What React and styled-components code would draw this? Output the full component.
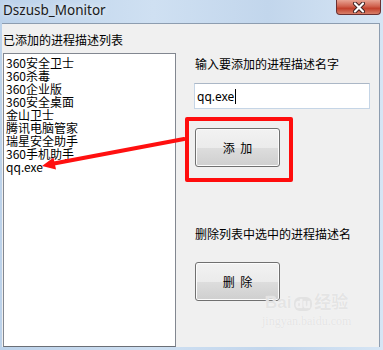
import React from 'react';
import styled, { createGlobalStyle } from 'styled-components';

const Global = createGlobalStyle`
  html, body {
    margin: 0;
    padding: 0;
    background: #c3d7ed;
  }
`;

const items = [
  '360安全卫士',
  '360杀毒',
  '360企业版',
  '360安全桌面',
  '金山卫士',
  '腾讯电脑管家',
  '瑞星安全助手',
  '360手机助手',
  'qq.exe',
];

const cjk = `"Noto Sans CJK SC", "Noto Sans", sans-serif`;

const App = () => {
  return (
    <>
      <Global />
      <Window>
        <TitleBar>
          <Title>Dszusb_Monitor</Title>
          <CloseButton>
            <svg width="16" height="11" viewBox="0 0 16 11">
              <path d="M4 1.5 L12 9.5 M12 1.5 L4 9.5" stroke="#3b2020" strokeWidth="4" strokeLinecap="round" />
              <path d="M4 1.5 L12 9.5 M12 1.5 L4 9.5" stroke="#ffffff" strokeWidth="2.2" strokeLinecap="round" />
            </svg>
          </CloseButton>
        </TitleBar>
        <Client>
          <LeftColumn>
            <Label>已添加的进程描述列表</Label>
            <ListBox>
              {items.map((it) => (
                <ListItem key={it}>{it}</ListItem>
              ))}
            </ListBox>
          </LeftColumn>
          <RightColumn>
            <Label>输入要添加的进程描述名字</Label>
            <TextBox>
              qq.exe<Caret />
            </TextBox>
            <Button $top={19}>添 加</Button>
            <Label $top={59}>删除列表中选中的进程描述名</Label>
            <Button $top={20}>删 除</Button>
          </RightColumn>
        </Client>
        <Highlight />
        <Watermark>
          <WatermarkLogo>
            Bai<Paw>du</Paw>经验
          </WatermarkLogo>
          <WatermarkUrl>jingyan.baidu.com</WatermarkUrl>
        </Watermark>
        <Annotation width="383" height="350" viewBox="0 0 383 350">
          <line x1="184" y1="139" x2="54" y2="163.5" stroke="#ff1010" strokeWidth="4" strokeLinecap="round" />
          <polygon points="42,166 56,169.5 53.5,157.5" fill="#ff1010" />
        </Annotation>
      </Window>
    </>
  );
};

const Window = styled.div`
  position: relative;
  width: 383px;
  height: 350px;
  display: flex;
  flex-direction: column;
  overflow: hidden;
  background: linear-gradient(90deg, #bcd2ea 0%, #cfe0f2 40%, #c2d6ec 70%, #d6e5f4 100%);
`;

const TitleBar = styled.div`
  height: 23px;
  flex: none;
  display: flex;
  align-items: flex-start;
  justify-content: space-between;
  padding-left: 3px;
`;

const Title = styled.div`
  margin-top: 2px;
  font-family: "Noto Sans", "DejaVu Sans", sans-serif;
  font-size: 13.5px;
  line-height: 16px;
  color: #1a1a1a;
  text-shadow: 0 0 6px rgba(255, 255, 255, 0.9);
`;

const CloseButton = styled.div`
  width: 45px;
  height: 15px;
  margin-right: 2px;
  display: flex;
  align-items: center;
  justify-content: center;
  box-sizing: border-box;
  border: 1px solid #6b3030;
  border-top: none;
  border-radius: 0 0 4px 4px;
  background: linear-gradient(180deg, #e8a493 0%, #d0624e 45%, #c2412c 60%, #d8806a 100%);
`;

const Client = styled.div`
  margin-left: 2px;
  width: 378px;
  height: 324px;
  box-sizing: border-box;
  border-top: 1px solid #8d9db0;
  border-right: 1px solid #8d9db0;
  background: #f0f0f0;
  display: flex;
`;

const LeftColumn = styled.div`
  width: 174px;
  display: flex;
  flex-direction: column;
  padding-top: 8px;
  box-sizing: border-box;
`;

const RightColumn = styled.div`
  margin-left: 18px;
  display: flex;
  flex-direction: column;
  align-items: flex-start;
  padding-top: 32px;
`;

const Label = styled.div`
  margin-top: ${(p) => p.$top || 0}px;
  padding-left: 1px;
  font-family: ${cjk};
  font-size: 12px;
  line-height: 16px;
  color: #000;
  white-space: nowrap;
`;

const ListBox = styled.div`
  margin-top: 5px;
  margin-left: 1px;
  flex: 1;
  background: #fff;
  border: 1px solid #828790;
  border-bottom-color: #6b6f76;
  padding: 2px 2px;
  box-sizing: border-box;
`;

const ListItem = styled.div`
  font-family: ${cjk};
  font-size: 12px;
  line-height: 13px;
  height: 13px;
  color: #000;
  white-space: nowrap;
`;

const TextBox = styled.div`
  margin-top: 11px;
  width: 176px;
  height: 26px;
  box-sizing: border-box;
  background: #fff;
  border: 1px solid #c5d5e6;
  border-top-color: #abb7c6;
  display: flex;
  align-items: center;
  padding-left: 2px;
  font-family: "Noto Sans", "DejaVu Sans", sans-serif;
  font-size: 12px;
  color: #000;
`;

const Caret = styled.span`
  display: inline-block;
  width: 1px;
  height: 15px;
  margin-left: 1px;
  background: #000;
`;

const Button = styled.div`
  margin-top: ${(p) => p.$top}px;
  margin-left: 1px;
  width: 85px;
  height: 39px;
  box-sizing: border-box;
  border: 1px solid #707070;
  border-radius: 3px;
  box-shadow: inset 0 0 0 1px #fcfcfc;
  background: linear-gradient(180deg, #f2f2f2 0%, #ebebeb 50%, #dddddd 51%, #cfcfcf 100%);
  display: flex;
  align-items: center;
  justify-content: center;
  font-family: ${cjk};
  font-size: 12px;
  word-spacing: 3px;
  color: #000;
  white-space: pre;
`;

const Highlight = styled.div`
  position: absolute;
  left: 185px;
  top: 117px;
  width: 108px;
  height: 65px;
  box-sizing: border-box;
  border: 4px solid #ff0d0d;
  border-radius: 2px;
  pointer-events: none;
`;

const Annotation = styled.svg`
  position: absolute;
  left: 0;
  top: 0;
  pointer-events: none;
`;

const Watermark = styled.div`
  position: absolute;
  left: 262px;
  top: 292px;
  display: flex;
  flex-direction: column;
  align-items: center;
  pointer-events: none;
  color: rgba(222, 222, 222, 0.8);
  text-shadow: 0 0 1px rgba(255, 255, 255, 0.9);
`;

const WatermarkLogo = styled.div`
  font-family: "Liberation Sans", ${cjk};
  font-weight: bold;
  font-size: 17px;
  line-height: 22px;
`;

const Paw = styled.span`
  display: inline-block;
  margin: 0 2px;
  padding: 0 2px;
  font-size: 12px;
  line-height: 14px;
  border-radius: 6px;
  background: rgba(222, 222, 222, 0.8);
  color: #f0f0f0;
`;

const WatermarkUrl = styled.div`
  font-family: "Liberation Serif", serif;
  font-size: 12px;
  line-height: 14px;
`;

export default App;
